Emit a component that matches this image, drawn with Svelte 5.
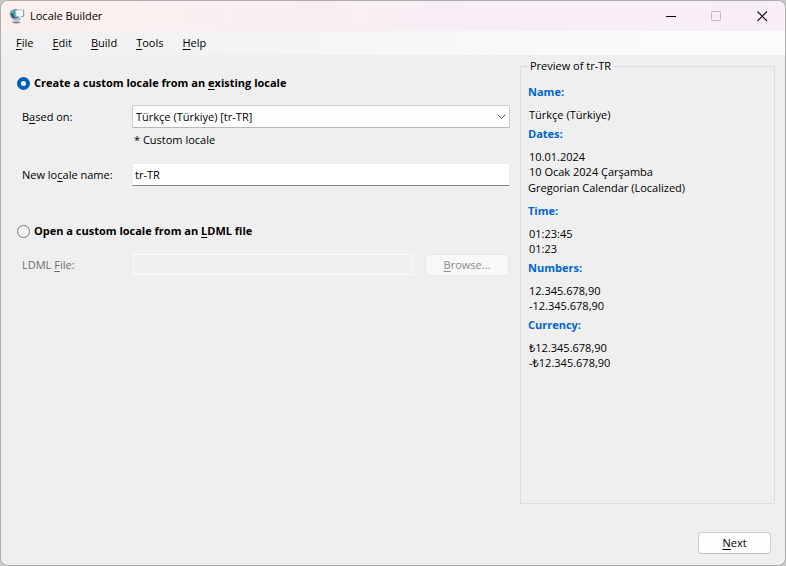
<script>
  const menus = ['File', 'Edit', 'Build', 'Tools', 'Help'];

  const preview = [
    { title: 'Name:', lines: ['Türkçe (Türkiye)'] },
    {
      title: 'Dates:',
      lines: ['10.01.2024', '10 Ocak 2024 Çarşamba'],
      calendar: 'Gregorian Calendar (Localized)'
    },
    { title: 'Time:', lines: ['01:23:45', '01:23'] },
    { title: 'Numbers:', lines: ['12.345.678,90', '-12.345.678,90'] },
    { title: 'Currency:', lines: ['₺12.345.678,90', '-₺12.345.678,90'] }
  ];

  let mode = $state('existing');
  let localeName = $state('tr-TR');
  let ldmlFile = $state('');
</script>

<div class="window">
  <header class="titlebar">
    <svg class="app-icon" width="16" height="16" viewBox="0 0 16 16" aria-hidden="true">
      <path d="M3 14.2 C4 12.8 10 12.8 11.5 14.2 C10.5 15.8 4 15.8 3 14.2Z" fill="#777a90" />
      <path d="M5 14 C7 13.2 8.5 13.3 10 14" fill="none" stroke="#d6d8e4" stroke-width="0.8" />
      <path d="M2.2 2.5 C0.4 5.5 1.2 10 5 11.6 C7.5 12.6 10 12 11.5 10.5" fill="none" stroke="#a5a8b8" stroke-width="1.3" />
      <circle cx="6.5" cy="6" r="4.8" fill="#2553a8" />
      <path d="M2.2 5 C2.6 2.8 4.2 1.5 6 1.3 L5.5 3.5 L3.5 5.5Z" fill="#7fb4dc" />
      <path d="M4.5 3.5 L7.5 2 L7.5 7.5 L9 9 L7 10.5 L5 8.5 L3.6 6.5Z" fill="#39a35a" />
      <path d="M6.5 2.2 L14.6 1.6 L14.6 8.2 L12 8.6 L10 10.6 L9.8 8.7 L6.8 8.6Z" fill="#edf5fa" stroke="#a9b9c6" stroke-width="0.7" />
      <path d="M14.7 2V8.2L12 8.7" fill="none" stroke="#7c8da0" stroke-width="0.8" />
    </svg>
    <h1>Locale Builder</h1>
    <div class="caption-buttons">
      <button aria-label="Minimize">
        <svg width="11" height="11" viewBox="0 0 11 11"><path d="M1 5.5H11" stroke="#000" /></svg>
      </button>
      <button aria-label="Maximize" disabled>
        <svg width="11" height="11" viewBox="0 0 11 11"><rect x="0.5" y="0.5" width="9" height="9" rx="0.5" fill="none" stroke="#c4bcc4" /></svg>
      </button>
      <button aria-label="Close">
        <svg width="11" height="11" viewBox="0 0 11 11"><path d="M0.5 0.5L10 10M10 0.5L0.5 10" stroke="#111" stroke-width="1.1" /></svg>
      </button>
    </div>
  </header>

  <nav class="menubar">
    {#each menus as menu}
      <button><u>{menu[0]}</u>{menu.slice(1)}</button>
    {/each}
  </nav>

  <main>
    <form class="source">
      <label class="choice">
        <input type="radio" name="mode" value="existing" bind:group={mode} />
        <span>Create a custom locale from an <u>e</u>xisting locale</span>
      </label>
      <div class="fields existing">
        <label for="based-on">B<u>a</u>sed on:</label>
        <div class="combo">
          <select id="based-on">
            <option>Türkçe (Türkiye) [tr-TR]</option>
          </select>
          <svg width="9" height="5" viewBox="0 0 9 5" aria-hidden="true"><path d="M0.5 0.5L4.5 4.5L8.5 0.5" fill="none" stroke="#555" /></svg>
        </div>
        <p class="note">* Custom locale</p>
        <label for="locale-name">New lo<u>c</u>ale name:</label>
        <input id="locale-name" type="text" bind:value={localeName} />
      </div>

      <label class="choice">
        <input type="radio" name="mode" value="ldml" bind:group={mode} />
        <span>Open a custom locale from an <u>L</u>DML file</span>
      </label>
      <div class="fields ldml" class:off={mode !== 'ldml'}>
        <label for="ldml-file">LDML <u>F</u>ile:</label>
        <div class="file-row">
          <input id="ldml-file" type="text" disabled={mode !== 'ldml'} bind:value={ldmlFile} />
          <button type="button" class="push" disabled={mode !== 'ldml'}><span><u>B</u>rowse...</span></button>
        </div>
      </div>
    </form>

    <fieldset class="preview">
      <legend>Preview of tr-TR</legend>
      {#each preview as group}
        <section>
          <h2>{group.title}</h2>
          {#each group.lines as line}
            <p>{line}</p>
          {/each}
          {#if group.calendar}
            <p class="calendar">{group.calendar}</p>
          {/if}
        </section>
      {/each}
    </fieldset>
  </main>

  <footer>
    <button type="button" class="push next"><span><u>N</u>ext</span></button>
  </footer>
</div>

<style>
  :global(body) {
    background: #c8c8c8;
  }

  .window {
    box-sizing: border-box;
    min-height: 100vh;
    display: flex;
    flex-direction: column;
    border: 1px solid #adadad;
    border-radius: 8px;
    overflow: hidden;
    background: #efefef;
    color: #000;
    font: 11px/16px "Open Sans", "Noto Sans", sans-serif;
  }

  button,
  input,
  select {
    box-sizing: border-box;
    margin: 0;
    font: inherit;
    color: inherit;
  }

  h1,
  h2,
  p {
    margin: 0;
    font-size: 11px;
  }

  u {
    text-underline-offset: 2px;
  }

  .titlebar {
    display: flex;
    align-items: center;
    height: 30px;
    padding-left: 8px;
    background: linear-gradient(90deg, #fbf0eb, #f7eef8 70%, #f8eef5);
  }

  h1 {
    flex: 1;
    margin-left: 5px;
    font-weight: 400;
  }

  .caption-buttons {
    display: flex;
    height: 100%;
  }

  .caption-buttons button {
    display: flex;
    align-items: center;
    justify-content: center;
    width: 46px;
    padding: 0;
    border: none;
    background: transparent;
  }

  .menubar {
    display: flex;
    gap: 1px;
    height: 24px;
    padding-left: 6px;
    background: linear-gradient(90deg, #f0f0f0, #fbfbfb 85%);
  }

  .menubar button {
    padding: 0 9px;
    border: none;
    background: transparent;
  }

  main {
    flex: 1;
    display: flex;
    gap: 10px;
    padding: 3px 10px 0 16px;
  }

  .source {
    flex: 1;
    padding-top: 16px;
  }

  .choice {
    display: flex;
    align-items: center;
    gap: 4px;
    height: 18px;
    font-weight: 700;
  }

  .choice input {
    appearance: none;
    width: 13px;
    height: 13px;
    border: 1px solid #777;
    border-radius: 50%;
    background: #f3f3f3;
  }

  .choice input:checked {
    border: 4px solid #0060b8;
    background: #fff;
  }

  .fields {
    display: grid;
    grid-template-columns: 110px 1fr;
    align-items: center;
    padding-left: 5px;
  }

  .existing {
    margin: 13px 0 36px;
  }

  .ldml {
    margin-top: 14px;
  }

  .combo {
    display: grid;
    align-items: center;
  }

  .combo select,
  .combo svg {
    grid-area: 1 / 1;
  }

  .combo svg {
    justify-self: end;
    margin-right: 4px;
    pointer-events: none;
  }

  select {
    appearance: none;
    width: 100%;
    height: 23px;
    padding: 0 20px 0 3px;
    border: 1px solid #d0d0d0;
    border-bottom-color: #b8b8b8;
    border-radius: 1px;
    background: #fdfdfd;
  }

  .note {
    grid-column: 2;
    padding: 4px 0 15px 2px;
  }

  input[type='text'] {
    min-width: 0;
    height: 23px;
    padding: 0 2px;
    border: 1px solid #ececec;
    border-bottom-color: #868686;
    background: #fff;
  }

  .file-row {
    display: flex;
    gap: 12px;
    padding: 0 1px;
  }

  .file-row input[type='text'] {
    flex: 1;
    height: 21px;
  }

  .off {
    color: #6d6d6d;
  }

  input[type='text']:disabled {
    border: 1px solid #fafafa;
    background: #f0f0f0;
  }

  .push {
    width: 84px;
    height: 22px;
    padding: 0;
    border: 1px solid #d0d0d0;
    border-bottom-color: #bcbcbc;
    border-radius: 4px;
    background: #fdfdfd;
  }

  .push:disabled {
    border-color: #e8e8e8;
    background: #f8f8f8;
    color: #8d8d8d;
  }

  .preview {
    box-sizing: border-box;
    width: 255px;
    margin: 0;
    padding: 10px 7px;
    border: 1px solid #dcdcdc;
  }

  legend {
    padding: 0 2px;
  }

  h2 {
    margin-bottom: 7px;
    color: #0066cc;
    font-weight: 700;
  }

  section {
    padding-bottom: 4px;
  }

  section p {
    padding-left: 1px;
    line-height: 15px;
  }

  section .calendar {
    margin: 1px 0 4px;
    padding-left: 0;
  }

  footer {
    display: flex;
    justify-content: flex-end;
    padding: 28px 14px 11px;
  }

  .next {
    width: 73px;
  }
</style>
